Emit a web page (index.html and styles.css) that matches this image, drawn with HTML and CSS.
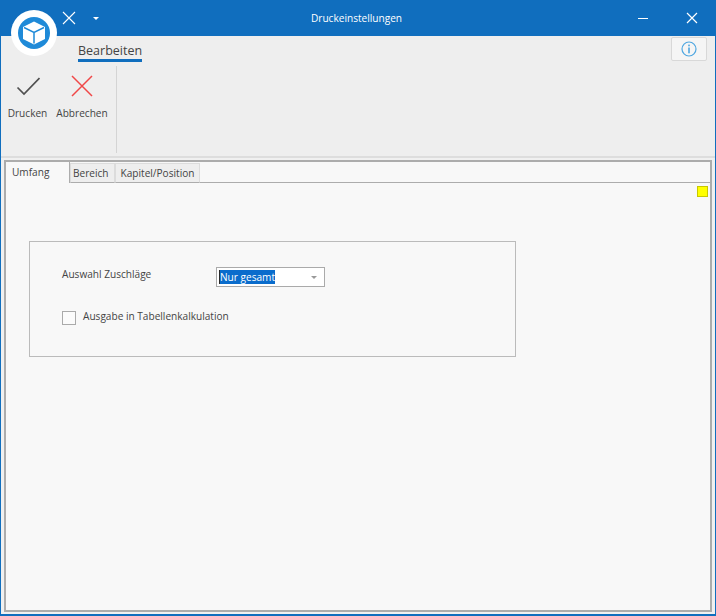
FILE: index.html
```html
<!DOCTYPE html>
<html lang="de">
<head>
    <meta charset="UTF-8">
    <title>Druckeinstellungen</title>
    <link rel="stylesheet" href="styles.css">
</head>
<body>
    <div class="window">
        <div class="logo">
            <svg width="46" height="46" viewBox="0 0 46 46">
                <circle cx="23" cy="23" r="23" fill="#fff"/>
                <circle cx="23" cy="23" r="16" fill="#1f8ad8"/>
                <path d="M23 11.5 L34 17 V29 L23 34.5 L12 29 V17 Z" fill="#fff"/>
                <path d="M13 17.5 L23 22.5 L33 17.5 M23 22.5 V33.5" fill="none" stroke="#1f8ad8" stroke-width="1.5"/>
            </svg>
        </div>

        <header class="titlebar">
            <div class="quick-access">
                <svg class="quick-close" width="14" height="14" viewBox="0 0 14 14"><path d="M1 1 L13 13 M13 1 L1 13" stroke="#fff" stroke-width="1.1"/></svg>
                <span class="quick-arrow"></span>
            </div>
            <div class="title">Druckeinstellungen</div>
            <div class="window-buttons">
                <span class="minimize"></span>
                <svg width="12" height="12" viewBox="0 0 12 12"><path d="M1 1 L11 11 M11 1 L1 11" stroke="#fff" stroke-width="1.2"/></svg>
            </div>
        </header>

        <section class="ribbon">
            <div class="ribbon-tabs">
                <span class="ribbon-tab">Bearbeiten</span>
                <button class="info-button">
                    <svg width="16" height="16" viewBox="0 0 16 16">
                        <circle cx="8" cy="8" r="7" fill="none" stroke="#4ea6e0" stroke-width="1.2"/>
                        <rect x="7.2" y="3.6" width="1.6" height="1.7" fill="#4ea6e0"/>
                        <rect x="7.2" y="6.5" width="1.6" height="5.8" fill="#4ea6e0"/>
                    </svg>
                </button>
            </div>
            <div class="ribbon-body">
                <div class="command command-print">
                    <svg width="24" height="20" viewBox="0 0 24 20"><path d="M1.5 11.5 L8 18 L23.5 2" fill="none" stroke="#505050" stroke-width="1.7"/></svg>
                    <span>Drucken</span>
                </div>
                <div class="command command-cancel">
                    <svg width="22" height="22" viewBox="0 0 22 22"><path d="M1 1 L21 21 M21 1 L1 21" stroke="#f04747" stroke-width="1.5"/></svg>
                    <span>Abbrechen</span>
                </div>
                <div class="ribbon-separator"></div>
            </div>
        </section>

        <main class="frame">
            <div class="tabs">
                <div class="tab active">Umfang</div>
                <div class="tab tab-range">Bereich</div>
                <div class="tab tab-chapter">Kapitel/Position</div>
                <div class="tabs-rest"></div>
            </div>
            <div class="tab-page">
                <div class="marker-row"><span class="marker"></span></div>
                <div class="group">
                    <div class="field-row">
                        <label class="field-label">Auswahl Zuschläge</label>
                        <div class="combo">
                            <span class="combo-value">Nur gesamt</span>
                            <span class="combo-arrow"></span>
                        </div>
                    </div>
                    <div class="check-row">
                        <span class="checkbox"></span>
                        <label>Ausgabe in Tabellenkalkulation</label>
                    </div>
                </div>
            </div>
        </main>
    </div>
</body>
</html>
```

FILE: styles.css
```css
* {
    box-sizing: border-box;
}

html, body {
    margin: 0;
    padding: 0;
}

body {
    font-family: "Open Sans", "Noto Sans", sans-serif;
    font-size: 10.1px;
    color: #444;
    background: #f0f0f0;
}

.window {
    position: relative;
    width: 716px;
    height: 616px;
    display: flex;
    flex-direction: column;
    background: #f0f0f0;
    border-left: 1px solid #106ebe;
    border-right: 1px solid #106ebe;
    border-bottom: 2px solid #106ebe;
}

.logo {
    position: absolute;
    left: 10px;
    top: 10px;
    width: 46px;
    height: 46px;
    z-index: 2;
}

.logo svg {
    display: block;
}

.titlebar {
    height: 36px;
    margin: 0 -1px;
    background: #106ebe;
    color: #fff;
    display: flex;
    align-items: center;
    flex: none;
}

.quick-access {
    width: 280px;
    padding-left: 62px;
    display: flex;
    align-items: center;
}

.quick-close {
    display: block;
}

.quick-arrow {
    margin-left: 17px;
    border-left: 3px solid transparent;
    border-right: 3px solid transparent;
    border-top: 3px solid #fff;
}

.title {
    width: 153px;
    text-align: center;
}

.window-buttons {
    flex: 1;
    display: flex;
    align-items: center;
    justify-content: flex-end;
    padding-right: 18px;
    gap: 38px;
}

.minimize {
    width: 10px;
    height: 1px;
    background: #fff;
}

.window-buttons svg {
    display: block;
}

.ribbon {
    height: 122px;
    flex: none;
    background: #eee;
    border-bottom: 2px solid #ddd;
}

.ribbon-tabs {
    height: 30px;
    display: flex;
    justify-content: space-between;
    padding-left: 77px;
    padding-right: 8px;
}

.ribbon-tab {
    height: 26px;
    padding-top: 6px;
    font-size: 12.5px;
    line-height: 17px;
    color: #444;
    border-bottom: 3px solid #106ebe;
}

.info-button {
    width: 36px;
    height: 24px;
    margin-top: 1px;
    padding: 0;
    background: #f5f5f5;
    border: 1px solid #d8d8d8;
    border-radius: 2px;
    display: flex;
    align-items: center;
    justify-content: center;
}

.ribbon-body {
    height: 88px;
    display: flex;
}

.command {
    display: flex;
    flex-direction: column;
    align-items: center;
}

.command svg {
    display: block;
}

.command span {
    line-height: 15px;
}

.command-print {
    width: 41px;
    margin-left: 6px;
    padding-top: 10px;
}

.command-print span {
    margin-top: 10px;
}

.command-cancel {
    width: 54px;
    margin-left: 7px;
    padding-top: 9px;
}

.command-cancel span {
    margin-top: 9px;
}

.ribbon-separator {
    width: 1px;
    height: 87px;
    margin-left: 7px;
    background: #d4d4d4;
}

.frame {
    flex: none;
    height: 452px;
    margin: 2px 3px 0 3px;
    border: 2px solid #acacac;
    background: #f8f8f8;
    display: flex;
    flex-direction: column;
}

.tabs {
    display: flex;
    height: 21px;
    flex: none;
}

.tab {
    height: 20px;
    margin-top: 1px;
    line-height: 18px;
    text-align: center;
    background: #eee;
    border: 1px solid #dcdcdc;
    border-bottom: 1px solid #acacac;
}

.tab.active {
    width: 64px;
    height: 21px;
    margin-top: 0;
    padding: 0 0 0 6px;
    line-height: 20px;
    text-align: left;
    background: #f8f8f8;
    border: none;
    border-right: 1px solid #acacac;
}

.tab-range {
    width: 45px;
    text-align: left;
    padding-left: 2px;
}

.tab-chapter {
    width: 85px;
}

.tabs-rest {
    flex: 1;
    border-bottom: 1px solid #acacac;
}

.tab-page {
    flex: 1;
}

.marker-row {
    display: flex;
    justify-content: flex-end;
    padding: 3px 2px 0 0;
}

.marker {
    width: 11px;
    height: 11px;
    background: #ffff00;
    border: 1px solid #c8c800;
}

.group {
    width: 487px;
    height: 116px;
    margin: 44px 0 0 23px;
    border: 1px solid #bbb;
    padding: 25px 0 0 32px;
}

.field-row {
    display: flex;
}

.field-label {
    width: 154px;
    line-height: 15px;
}

.combo {
    width: 109px;
    height: 20px;
    background: #fff;
    border: 1px solid #aaa;
    display: flex;
    align-items: center;
    justify-content: space-between;
    padding: 0 7px 0 2px;
}

.combo-value {
    background: #0a6ccc;
    color: #fff;
    line-height: 14px;
    border-left: 1px solid #2a2a2a;
}

.combo-arrow {
    border-left: 3px solid transparent;
    border-right: 3px solid transparent;
    border-top: 3px solid #999;
}

.check-row {
    display: flex;
    gap: 7px;
    margin-top: 24px;
    align-items: flex-start;
}

.checkbox {
    width: 14px;
    height: 14px;
    background: #fbfbfb;
    border: 1px solid #aaa;
}

.check-row label {
    line-height: 10px;
}
```
